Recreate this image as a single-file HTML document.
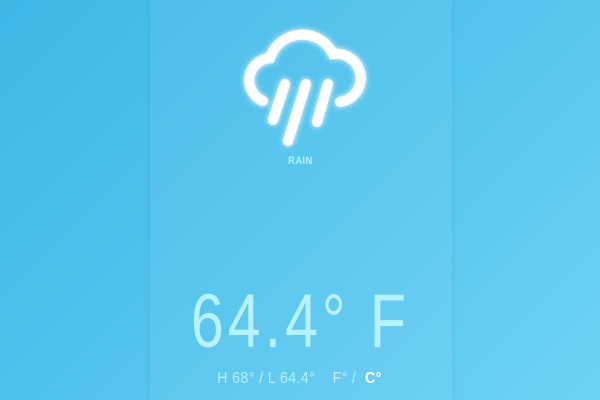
<!DOCTYPE html>
<html><head><style>
html,body{margin:0;padding:0}
body{width:600px;height:400px;overflow:hidden;position:relative;background:linear-gradient(135deg,#3db7e5 0%,#52c4ee 50%,#6fd2f5 100%);font-family:"Liberation Sans",sans-serif}
.panel{position:absolute;left:150px;top:0;width:302px;height:400px;background:rgba(255,255,255,0.05);box-shadow:0 0 6px rgba(0,0,0,0.06)}
svg{position:absolute;left:0;top:0}
.t{position:absolute;width:600px;text-align:center;left:0;color:#b6f2ff}
.t span.s{display:inline-block;transform-origin:center}
.rain{top:155px;font-size:11px;font-weight:bold;letter-spacing:0.5px}
.rain span.s{transform:scaleX(0.85)}
.temp{top:282px;font-size:76px;line-height:80px;letter-spacing:5px}
.temp span.s{transform:scaleX(0.78)}
.hl{top:369px;font-size:16px;line-height:20px;letter-spacing:0.5px}
.hl span.s{transform:scaleX(0.88)}
</style></head><body>
<div class="panel"></div>
<svg width="600" height="400">
<defs><filter id="g" x="-30%" y="-30%" width="160%" height="160%"><feGaussianBlur stdDeviation="3" result="b"/><feMerge><feMergeNode in="b"/><feMergeNode in="SourceGraphic"/></feMerge></filter></defs>
<g filter="url(#g)" fill="none" stroke="#fff" stroke-width="10" stroke-linecap="round">
<path d="M263,101 A22.4,22.4 0 0 1 270,58 A34,34 0 0 1 333,54 A24,24 0 0 1 340,102"/>
<path d="M285,84 L273,120 M306,84 L288,141 M328,84 L317,122"/>
</g></svg>
<div class="t rain"><span class="s">RAIN</span></div>
<div class="t temp"><span class="s">64.4° F</span></div>
<div class="t hl"><span class="s">H 68° / L 64.4° &nbsp;&nbsp; <span style="color:#cfe8f2">F°</span> / &nbsp;<b style="color:#fff">C°</b></span></div>
</body></html>
